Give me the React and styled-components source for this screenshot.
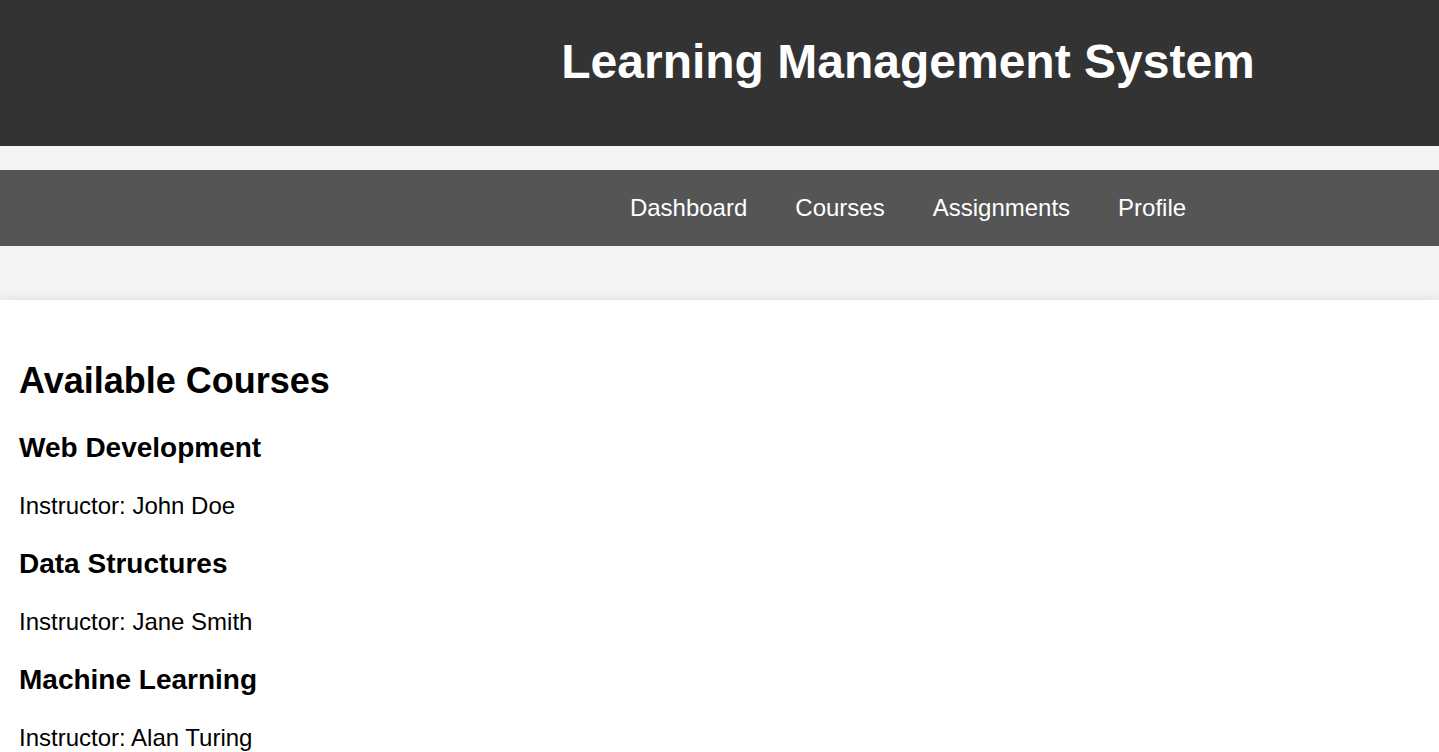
import React from "react";
import styled, { createGlobalStyle } from "styled-components";

const GlobalStyle = createGlobalStyle`
  body {
    margin: 0;
    padding: 0;
    background: #f4f4f4;
    font-family: "Liberation Sans", Arial, sans-serif;
  }
`;

const Header = styled.header`
  background: #333;
  color: #fff;
  height: 146px;
  box-sizing: border-box;
  padding: 34px 0 0 377px;
  text-align: center;
`;

const Title = styled.h1`
  margin: 0;
  font-size: 48px;
  font-weight: 700;
`;

const NavBar = styled.nav`
  background: #555;
  margin-top: 24px;
  padding: 24px 0 24px 377px;
  display: flex;
  justify-content: center;
`;

const NavLink = styled.a`
  color: #fff;
  font-size: 24px;
  line-height: 27.6px;
  margin: 0 24px;
  text-decoration: none;
`;

const Main = styled.main`
  margin-top: 54px;
  background: #fff;
  box-shadow: 0 0 12px rgba(0, 0, 0, 0.1);
  padding: 30px 19px 20px;
  min-height: 400px;
`;

const Heading = styled.h2`
  margin: 30px 0;
  font-size: 36px;
  font-weight: 700;
  color: #000;
`;

const CourseName = styled.h3`
  margin: 28px 0;
  font-size: 28px;
  font-weight: 700;
  color: #000;
`;

const Instructor = styled.p`
  margin: 24px 0;
  font-size: 24px;
  color: #000;
`;

const courses = [
  { name: "Web Development", instructor: "John Doe" },
  { name: "Data Structures", instructor: "Jane Smith" },
  { name: "Machine Learning", instructor: "Alan Turing" },
];

const App = () => {
  return (
    <>
      <GlobalStyle />
      <Header>
        <Title>Learning Management System</Title>
      </Header>
      <NavBar>
        <NavLink href="#">Dashboard</NavLink>
        <NavLink href="#">Courses</NavLink>
        <NavLink href="#">Assignments</NavLink>
        <NavLink href="#">Profile</NavLink>
      </NavBar>
      <Main>
        <Heading>Available Courses</Heading>
        {courses.map((course) => (
          <div key={course.name}>
            <CourseName>{course.name}</CourseName>
            <Instructor>Instructor: {course.instructor}</Instructor>
          </div>
        ))}
      </Main>
    </>
  );
};

export default App;
